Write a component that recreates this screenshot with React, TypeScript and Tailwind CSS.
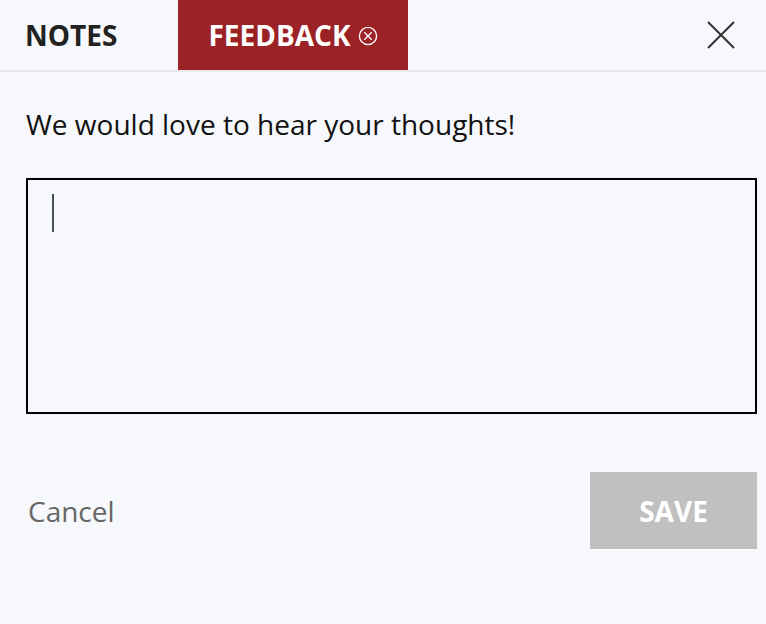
import React from "react";

export default function App() {
  return (
    <div
      className="w-[766px] h-[624px] bg-[#f7f8fc] overflow-hidden"
      style={{ fontFamily: '"Open Sans", "Noto Sans", sans-serif' }}
    >
      <div className="h-[72px] border-b-2 border-[#e8e9ec] flex items-stretch pr-[31px]">
        <div className="w-[178px] pl-[25px] flex items-center">
          <span className="text-[28px] font-bold text-[#222] leading-none">NOTES</span>
        </div>
        <div className="w-[230px] bg-[#9b2226] flex items-center justify-center gap-[7px]">
          <span className="text-[28px] font-bold text-white leading-none">FEEDBACK</span>
          <svg width="20" height="20" viewBox="0 0 20 20" fill="none" className="mt-[1px]">
            <circle cx="10" cy="10" r="8.6" stroke="white" strokeWidth="1.3" />
            <path d="M6.3 6.3 L13.7 13.7 M13.7 6.3 L6.3 13.7" stroke="white" strokeWidth="1.3" />
          </svg>
        </div>
        <div className="flex-1" />
        <div className="flex items-center">
          <svg width="28" height="28" viewBox="0 0 28 28" fill="none">
            <path d="M1 1 L27 27 M27 1 L1 27" stroke="#333" strokeWidth="2" />
          </svg>
        </div>
      </div>
      <div className="pl-[26px] pr-[9px]">
        <p className="mt-[33px] text-[28px] leading-[38px] text-[#111]">
          We would love to hear your thoughts!
        </p>
        <div className="relative mt-[35px]">
          <textarea
            className="block w-full h-[236px] border-2 border-black bg-transparent resize-none outline-none p-[16px]"
            aria-label="Feedback"
          />
          <div className="absolute left-[26px] top-[16px] w-[2px] h-[38px] bg-[#4b5058]" />
        </div>
        <div className="mt-[58px] flex items-center justify-between">
          <button className="text-[28px] text-[#666] leading-none pl-[2px]">Cancel</button>
          <button className="w-[167px] h-[77px] bg-[#c0c0c0] text-white text-[28px] font-bold">
            SAVE
          </button>
        </div>
      </div>
    </div>
  );
}
